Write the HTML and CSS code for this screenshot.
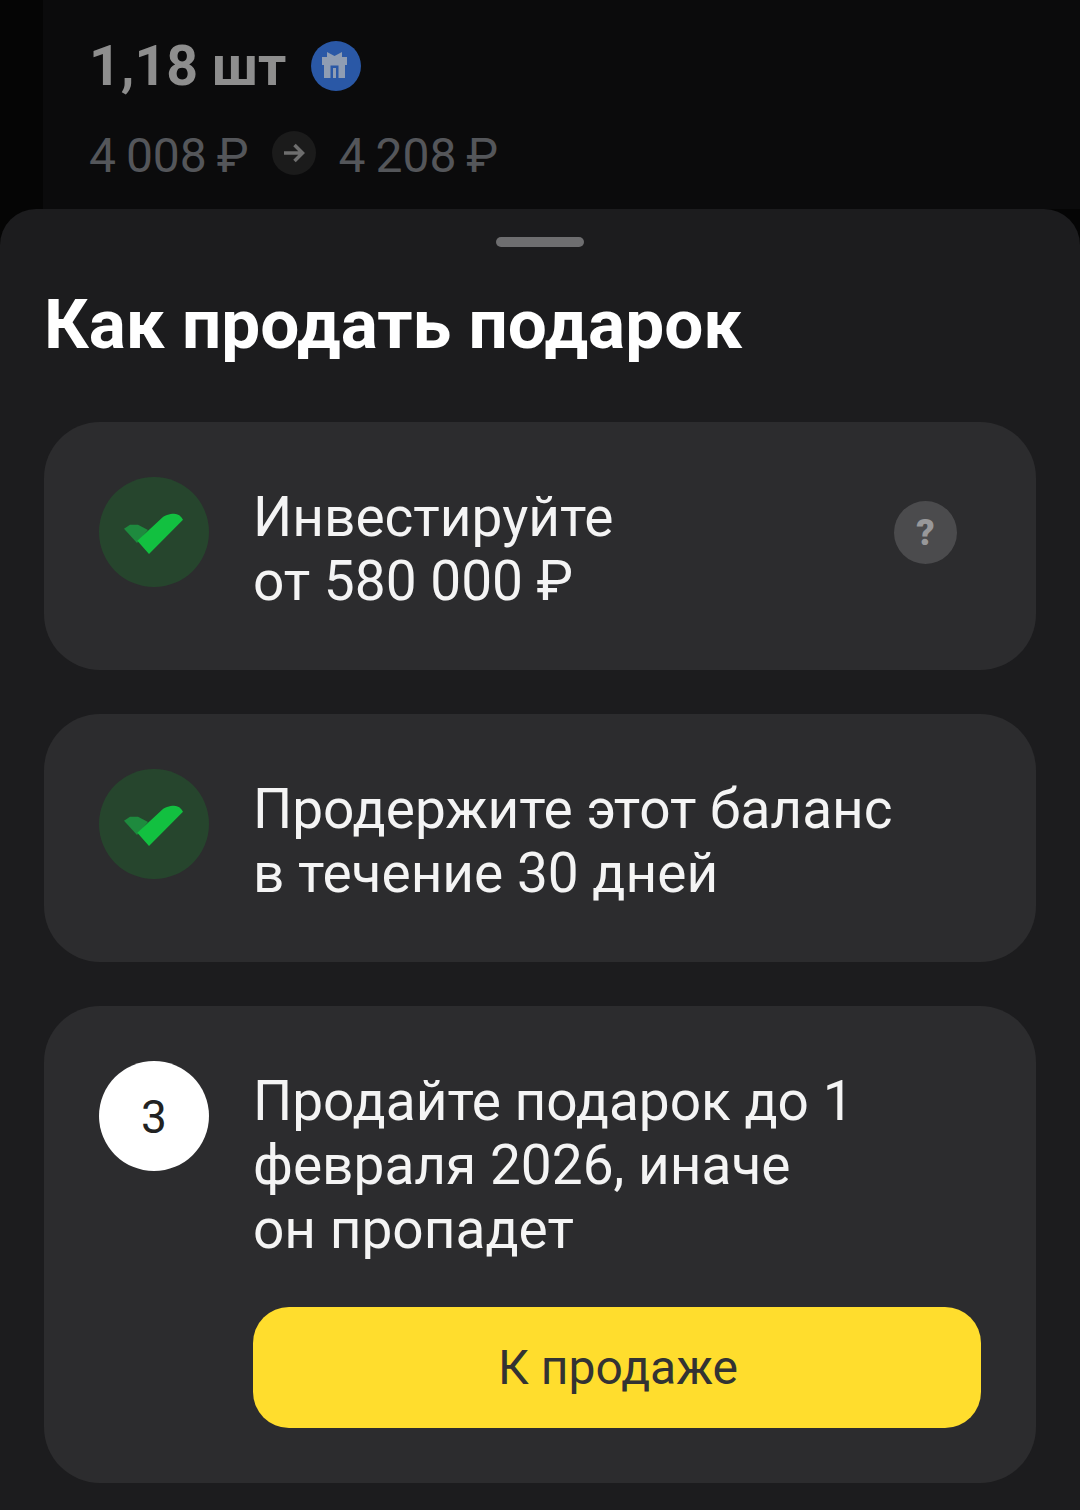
FILE: index.html
```html
<!DOCTYPE html>
<html lang="ru">
<head>
    <meta charset="UTF-8">
    <meta name="viewport" content="width=device-width, initial-scale=1.0">
    <title>Как продать подарок</title>
    <link rel="stylesheet" href="styles.css">
</head>
<body>
    <div class="backdrop">
        <div class="amount-row">
            <span class="amount">1,18 шт</span>
            <span class="gift-badge">
                <svg width="30" height="30" viewBox="0 0 30 30">
                    <path d="M6 1l7.500 4 7.500-4v5h5v8H1V6h5z" fill="#8f9db3"/>
                    <path d="M3 14h21v13H3z" fill="#8f9db3"/>
                    <path d="M9.500 14.500h8V27H15V17h-3v10H9.500z" fill="#2a58a6"/>
                </svg>
            </span>
        </div>
        <div class="price-row">
            <span class="price">4 008 ₽</span>
            <span class="arrow-badge">
                <svg width="22" height="22" viewBox="0 0 22 22" fill="none" stroke="#6e6e6e" stroke-width="3.500">
                    <path d="M1 11h18M11.500 3l8 8-8 8"/>
                </svg>
            </span>
            <span class="price">4 208 ₽</span>
        </div>
    </div>

    <div class="sheet">
        <div class="handle"></div>
        <h1>Как продать подарок</h1>

        <div class="step">
            <div class="check-circle">
                <svg width="60" height="44" viewBox="0 -3 60 44">
                    <path d="M0 15.700L6 11.700H14L24 17L13 30z" fill="#1e8a3e"/>
                    <path d="M13.300 27.700L36 6.700C40 2 46 .7 50 .7 54 .7 57 3 59 6.700L25 41z" fill="#12c040"/>
                </svg>
            </div>
            <div class="step-text">Инвестируйте<br>от 580 000 ₽</div>
            <div class="help">?</div>
        </div>

        <div class="step">
            <div class="check-circle">
                <svg width="60" height="44" viewBox="0 -3 60 44">
                    <path d="M0 15.700L6 11.700H14L24 17L13 30z" fill="#1e8a3e"/>
                    <path d="M13.300 27.700L36 6.700C40 2 46 .7 50 .7 54 .7 57 3 59 6.700L25 41z" fill="#12c040"/>
                </svg>
            </div>
            <div class="step-text">Продержите этот баланс<br>в течение 30 дней</div>
        </div>

        <div class="step step-last">
            <div class="number-circle">3</div>
            <div class="step-body">
                <div class="step-text">Продайте подарок до 1<br>февраля 2026, иначе<br>он пропадет</div>
                <button class="btn-sell">К продаже</button>
            </div>
        </div>
    </div>
</body>
</html>
```

FILE: styles.css
```css
* {
    box-sizing: border-box;
}

html, body {
    margin: 0;
    padding: 0;
}

body {
    width: 1080px;
    height: 1510px;
    overflow: hidden;
    background-color: #050505;
    font-family: Roboto, "Liberation Sans", sans-serif;
}

.backdrop {
    height: 209px;
    margin-left: 43px;
    padding: 36px 0 0 46px;
    background-color: #0b0b0c;
}

.amount-row {
    display: flex;
    align-items: center;
    gap: 25px;
    height: 60px;
}

.amount {
    font-size: 55.5px;
    font-weight: 700;
    color: #8e8e8e;
}

.gift-badge {
    display: flex;
    align-items: center;
    justify-content: center;
    width: 50px;
    height: 50px;
    border-radius: 50%;
    background-color: #2a58a6;
}

.price-row {
    display: flex;
    align-items: center;
    gap: 23px;
    height: 60px;
    margin-top: 29px;
}

.price {
    font-size: 48px;
    color: #54565a;
    word-spacing: -2px;
}

.arrow-badge {
    display: flex;
    align-items: center;
    justify-content: center;
    width: 44px;
    height: 44px;
    margin-bottom: 4px;
    border-radius: 50%;
    background-color: #1b1b1b;
}

.sheet {
    height: 1301px;
    padding: 28px 44px 0;
    border-radius: 36px 36px 0 0;
    background-color: #1c1c1e;
}

.handle {
    width: 88px;
    height: 10px;
    margin: 0 auto;
    border-radius: 5px;
    background-color: #6e6e70;
}

h1 {
    margin: 38px 0 57px;
    font-size: 69.3px;
    line-height: 80px;
    font-weight: 700;
    color: #fff;
}

.step {
    display: flex;
    align-items: flex-start;
    gap: 44px;
    min-height: 248px;
    margin-bottom: 44px;
    padding: 55px;
    border-radius: 56px;
    background-color: #2c2c2e;
}

.check-circle {
    display: flex;
    align-items: center;
    justify-content: center;
    flex: none;
    width: 110px;
    height: 110px;
    border-radius: 50%;
    background-color: #26452d;
}

.number-circle {
    display: flex;
    align-items: center;
    justify-content: center;
    flex: none;
    width: 110px;
    height: 110px;
    padding-top: 2px;
    border-radius: 50%;
    background-color: #fff;
    font-size: 46px;
    color: #222;
}

.step-text {
    padding-top: 8px;
    font-size: 55px;
    line-height: 64px;
    color: #f4f4f4;
    white-space: nowrap;
}

.help {
    display: flex;
    align-items: center;
    justify-content: center;
    flex: none;
    width: 63px;
    height: 63px;
    margin: 24px 24px 0 auto;
    border-radius: 50%;
    background-color: #4b4b4d;
    font-size: 36px;
    font-weight: 900;
    color: #98989a;
}

.step-body {
    flex: 1;
}

.btn-sell {
    display: block;
    width: 728px;
    height: 121px;
    margin-top: 46px;
    padding-left: 8px;
    border: none;
    border-radius: 36px;
    background-color: #ffdd2d;
    font-family: Roboto, "Liberation Sans", sans-serif;
    font-size: 48px;
    color: #333;
}
```
